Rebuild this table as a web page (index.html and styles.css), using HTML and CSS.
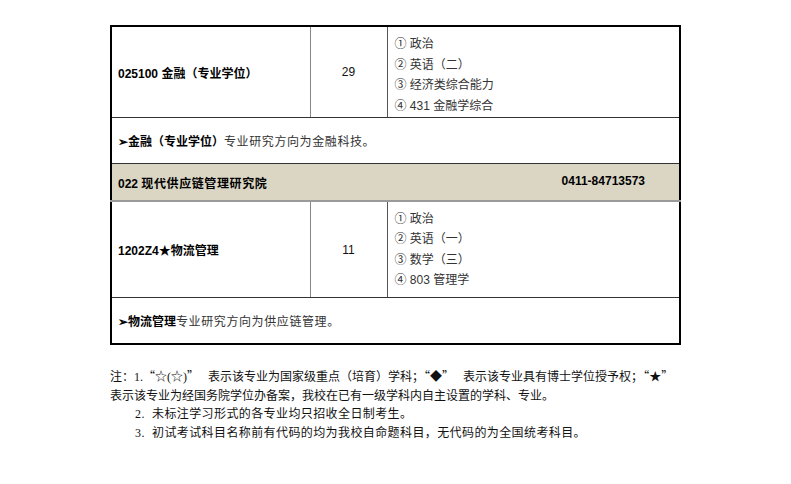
FILE: index.html
```html
<!DOCTYPE html>
<html>
<head>
<meta charset="utf-8">
<link rel="stylesheet" href="styles.css">
</head>
<body>
<div class="page">
  <table class="grid">
    <colgroup>
      <col class="c1"><col class="c2"><col class="c3">
    </colgroup>
    <tr class="major m1">
      <td class="name">025100 金融（专业学位）</td>
      <td class="num">29</td>
      <td class="subj">
        <div>① 政治</div>
        <div>② 英语（二）</div>
        <div>③ 经济类综合能力</div>
        <div>④ 431 金融学综合</div>
      </td>
    </tr>
    <tr class="note">
      <td colspan="3"><b>➢金融（专业学位）</b><span class="sp">专业研究方向为金融科技。</span></td>
    </tr>
    <tr class="dept">
      <td colspan="3">
        <div class="deptrow"><span>022 <span class="sp">现代供应链管理研究院</span></span><span>0411-84713573</span></div>
      </td>
    </tr>
    <tr class="major m2">
      <td class="name">1202Z4★物流管理</td>
      <td class="num">11</td>
      <td class="subj">
        <div>① 政治</div>
        <div>② 英语（一）</div>
        <div>③ 数学（三）</div>
        <div>④ 803 管理学</div>
      </td>
    </tr>
    <tr class="note last">
      <td colspan="3"><b>➢物流管理</b><span class="sp">专业研究方向为供应链管理。</span></td>
    </tr>
  </table>

  <div class="foot">
    <div>注：1.<span class="q">“</span>☆(☆)<span class="q">”</span>&nbsp;&nbsp; 表示该专业为国家级重点（培育）学科；<span class="q">“</span>◆<span class="q">”</span>&nbsp;&nbsp; 表示该专业具有博士学位授予权；<span class="q">“</span>★<span class="q">”</span></div>
    <div>表示该专业为经国务院学位办备案，我校在已有一级学科内自主设置的学科、专业。</div>
    <div class="ind"><span class="n">2.</span>未标注学习形式的各专业均只招收全日制考生。</div>
    <div class="ind"><span class="n">3.</span>初试考试科目名称前有代码的均为我校自命题科目，无代码的为全国统考科目。</div>
  </div>
</div>
</body>
</html>
```

FILE: styles.css
```css
html, body {
  margin: 0;
  padding: 0;
  background: #fff;
}
.page {
  padding: 25px 0 0 110px;
  font-family: "Liberation Sans", "Noto Sans CJK SC", sans-serif;
  font-size: 12px;
  color: #222;
}
.grid {
  border-collapse: collapse;
  table-layout: fixed;
  width: 569px;
  border: 2px solid #000;
}
.c1 { width: 199px; }
.c2 { width: 77px; }
.c3 { width: 293px; }
.grid td {
  padding: 0 0 0 6px;
  vertical-align: middle;
}
.major td {
  height: 90px;
  border-bottom: 1px solid #333;
}
.major.m2 td { height: 95px; }
.major .name {
  font-weight: bold;
  color: #000;
  border-right: 1px solid #888;
}
.major .num {
  text-align: center;
  padding: 0;
  color: #111;
  border-right: 1px solid #555;
}
.subj {
  padding-left: 7px !important;
  color: #333;
}
.m1 .subj {
  padding-top: 6px !important;
  height: 84px !important;
}
.subj div {
  line-height: 20.5px;
}
.sp {
  letter-spacing: 0.6px;
}
.note td {
  height: 45px;
  color: #333;
  border-bottom: 1px solid #333;
}
.note b { color: #000; }
.dept td {
  height: 36px;
  background: #dbd6c4;
  border-top: 1px solid #333;
  border-bottom: 2px solid #9a9a9a;
  font-weight: bold;
  color: #000;
}
.deptrow {
  display: flex;
  justify-content: space-between;
  padding-right: 34px;
}
.foot {
  margin-top: 22px;
  width: 600px;
  font-family: "Liberation Serif", "Noto Sans CJK SC", serif;
  font-size: 12px;
  line-height: 18.5px;
  color: #111;
  white-space: nowrap;
}
.foot .q {
  font-family: "Noto Sans CJK SC", sans-serif;
}
.foot .ind {
  padding-left: 25px;
  letter-spacing: 0.4px;
}
.foot .n {
  display: inline-block;
  width: 17px;
}
```
